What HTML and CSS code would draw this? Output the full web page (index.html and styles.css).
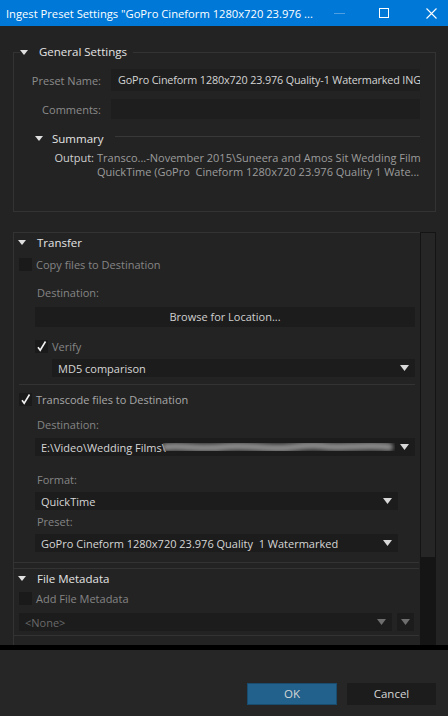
FILE: index.html
```html
<!DOCTYPE html>
<html>
<head>
<meta charset="utf-8">
<link rel="stylesheet" href="styles.css">
</head>
<body>
<div class="window">
  <div class="titlebar">
    <span class="title">Ingest Preset Settings "GoPro Cineform 1280x720 23.976 ...</span>
    <span class="tb-min"></span>
    <span class="tb-max"></span>
    <svg class="tb-close" width="11" height="11" viewBox="0 0 11 11"><path d="M0.5 0.5L10.5 10.5M10.5 0.5L0.5 10.5" stroke="#fff" stroke-width="1.1"/></svg>
  </div>

  <fieldset class="general">
    <legend class="legend"><svg class="tri" width="8" height="5" viewBox="0 0 8 5"><path d="M0 0H8L4 5Z" fill="#e0e0e0"/></svg><span class="head-text">General Settings</span></legend>
    <div class="frow first">
      <span class="flabel">Preset Name:</span>
      <div class="input tall">GoPro Cineform 1280x720 23.976 Quality-1 Watermarked ING</div>
    </div>
    <div class="frow">
      <span class="flabel">Comments:</span>
      <div class="input"></div>
    </div>
    <div class="summary">
      <svg class="tri" width="8" height="5" viewBox="0 0 8 5"><path d="M0 0H8L4 5Z" fill="#e0e0e0"/></svg>
      <span class="head-text">Summary</span>
      <span class="sumline"></span>
    </div>
    <div class="output">
      <span class="olabel">Output:</span>
      <div class="otext">
        <div>Transco...-November 2015\Suneera and Amos Sit Wedding Film</div>
        <div>QuickTime (GoPro&nbsp; Cineform 1280x720 23.976 Quality 1 Wate...</div>
      </div>
    </div>
  </fieldset>

  <div class="scrollarea">
    <div class="panel">
      <div class="section transfer">
        <div class="shead"><svg class="tri" width="8" height="5" viewBox="0 0 8 5"><path d="M0 0H8L4 5Z" fill="#e0e0e0"/></svg><span class="head-text">Transfer</span></div>
        <div class="crow r-copy"><span class="cbox"></span><span class="ctext dim">Copy files to Destination</span></div>
        <div class="lbl l-dest1">Destination:</div>
        <div class="button browse">Browse for Location...</div>
        <div class="crow r-verify"><span class="cbox"><svg width="13" height="13" viewBox="0 0 13 13"><path d="M3 7.2L5.2 10.2L10.5 1.5" fill="none" stroke="#f2f2f2" stroke-width="1.6"/></svg></span><span class="ctext dim">Verify</span></div>
        <div class="dd dd-md5"><span>MD5 comparison</span><svg class="arr" width="9" height="6" viewBox="0 0 9 6"><path d="M0 0H9L4.5 6Z" fill="#d8d8d8"/></svg></div>
        <div class="sep"></div>
        <div class="crow r-trans"><span class="cbox"><svg width="13" height="13" viewBox="0 0 13 13"><path d="M3 7.2L5.2 10.2L10.5 1.5" fill="none" stroke="#f2f2f2" stroke-width="1.6"/></svg></span><span class="ctext">Transcode files to Destination</span></div>
        <div class="lbl l-dest2">Destination:</div>
        <div class="dd dd-dest"><span>E:\Video\Wedding Films\</span><svg class="blur" width="232" height="18" viewBox="0 0 232 18"><defs><filter id="b" x="-10%" y="-80%" width="120%" height="260%"><feGaussianBlur stdDeviation="2"/></filter></defs><path d="M3 9 C20 7 40 12 60 9 C80 6 100 11 120 10 C135 9 145 6 160 8 C180 11 200 6 226 9" fill="none" stroke="#8a8a8a" stroke-width="8" stroke-linecap="round" filter="url(#b)"/></svg><svg class="arr" width="9" height="6" viewBox="0 0 9 6"><path d="M0 0H9L4.5 6Z" fill="#d8d8d8"/></svg></div>
        <div class="lbl l-format">Format:</div>
        <div class="dd dd-short dd-format"><span>QuickTime</span><svg class="arr" width="9" height="6" viewBox="0 0 9 6"><path d="M0 0H9L4.5 6Z" fill="#d8d8d8"/></svg></div>
        <div class="lbl l-preset">Preset:</div>
        <div class="dd dd-short dd-preset"><span>GoPro Cineform 1280x720 23.976 Quality&nbsp; 1 Watermarked</span><svg class="arr" width="9" height="6" viewBox="0 0 9 6"><path d="M0 0H9L4.5 6Z" fill="#d8d8d8"/></svg></div>
      </div>
      <div class="section meta">
        <div class="shead"><svg class="tri" width="8" height="5" viewBox="0 0 8 5"><path d="M0 0H8L4 5Z" fill="#e0e0e0"/></svg><span class="head-text">File Metadata</span></div>
        <div class="crow r-meta"><span class="cbox"></span><span class="ctext dim">Add File Metadata</span></div>
        <div class="nonerow">
          <div class="dd dd-none"><span>&lt;None&gt;</span><svg class="arr" width="9" height="6" viewBox="0 0 9 6"><path d="M0 0H9L4.5 6Z" fill="#6e6e6e"/></svg></div>
          <div class="dd-btn"><svg class="arr" width="9" height="6" viewBox="0 0 9 6"><path d="M0 0H9L4.5 6Z" fill="#6e6e6e"/></svg></div>
        </div>
        <div class="endline"></div>
      </div>
    </div>
    <div class="scrollbar">
      <div class="thumb"></div>
      <div class="track"></div>
    </div>
  </div>

  <div class="blackbar"></div>
  <div class="footer">
    <div class="fbtn ok">OK</div>
    <div class="fbtn cancel">Cancel</div>
  </div>
</div>
</body>
</html>
```

FILE: styles.css
```css
html, body {
  margin: 0;
  padding: 0;
  background: #232323;
}
body {
  width: 448px;
  height: 716px;
  overflow: hidden;
  font-family: "Open Sans", "Noto Sans", sans-serif;
  font-size: 11px;
  color: #cfcfcf;
}
.window {
  width: 448px;
  height: 716px;
  display: flex;
  flex-direction: column;
}
.titlebar {
  height: 26px;
  background: #0078d7;
  display: flex;
  align-items: center;
  flex-shrink: 0;
}
.title {
  color: #ffffff;
  font-size: 11.2px;
  margin-left: 6px;
  white-space: nowrap;
  width: 326px;
  overflow: hidden;
}
.tb-min {
  width: 11px;
  height: 1px;
  background: #4f9ee0;
  margin-left: 2px;
}
.tb-max {
  width: 8px;
  height: 8px;
  border: 1px solid #ffffff;
  margin-left: 34px;
}
.tb-close {
  margin-left: 37px;
}

/* General settings */
.general {
  margin: 18px 12px 0 13px;
  padding: 0 15px 0 0;
  border: 1px solid #333333;
  height: 166px;
  box-sizing: content-box;
  min-width: 0;
  flex-shrink: 0;
}
.legend {
  padding: 0 6px 0 0;
  margin-left: 6px;
  display: flex;
  align-items: center;
  height: 16px;
  line-height: 16px;
}
.tri {
  display: block;
  flex-shrink: 0;
}
.head-text {
  color: #e4e4e4;
  font-size: 11.5px;
  margin-left: 11px;
}
.frow {
  display: flex;
  align-items: center;
  margin-top: 8px;
}
.frow.first {
  margin-top: 9px;
}
.flabel {
  width: 87px;
  text-align: right;
  color: #8c8c8c;
  flex-shrink: 0;
}
.input {
  margin-left: 10px;
  flex: 1;
  height: 20px;
  line-height: 20px;
  background: #1e1e1e;
  color: #d4d4d4;
  padding-left: 7px;
  white-space: nowrap;
  overflow: hidden;
}
.input.tall {
  height: 22px;
  line-height: 22px;
  font-size: 10.8px;
  letter-spacing: -0.15px;
}
.summary {
  display: flex;
  align-items: center;
  margin-top: 12px;
  margin-left: 21px;
  height: 14px;
}
.summary .head-text {
  margin-left: 9px;
}
.sumline {
  flex: 1;
  height: 1px;
  background: #383838;
  margin-left: 11px;
  margin-top: -3px;
}
.output {
  display: flex;
  margin-top: 6px;
  line-height: 14px;
}
.olabel {
  width: 80px;
  text-align: right;
  color: #d0d0d0;
  flex-shrink: 0;
}
.otext {
  margin-left: 3px;
  color: #9c9c9c;
  white-space: nowrap;
}

/* Lower scrollable area */
.scrollarea {
  margin: 20px 12px 0 13px;
  height: 413px;
  display: flex;
  flex-shrink: 0;
}
.panel {
  flex: 1;
  border-left: 1px solid #333333;
  border-top: 1px solid #333333;
  overflow: hidden;
  display: flex;
  flex-direction: column;
}
.section {
  margin-right: 1px;
}
.transfer {
  border-bottom: 1px solid #333333;
  padding-bottom: 10px;
}
.meta {
  border-top: 1px solid #333333;
  margin-top: 5px;
}
.shead {
  height: 19px;
  display: flex;
  align-items: center;
  padding-left: 4px;
}
.shead .head-text {
  margin-left: 11px;
}
.crow {
  height: 15px;
  display: flex;
  align-items: center;
  padding-left: 5px;
}
.cbox {
  width: 13px;
  height: 13px;
  background: #1a1a1a;
  flex-shrink: 0;
  display: block;
}
.cbox svg {
  display: block;
}
.ctext {
  margin-left: 4px;
  color: #a8a8a8;
}
.ctext.dim {
  color: #858585;
}
.lbl {
  height: 14px;
  line-height: 14px;
  padding-left: 23px;
  color: #858585;
}
.r-copy { margin-top: 5px; }
.l-dest1 { margin-top: 14px; }
.button {
  background: #1c1c1c;
  color: #d0d0d0;
  text-align: center;
}
.browse {
  margin: 7px 0 0 21px;
  width: 380px;
  height: 20px;
  line-height: 20px;
}
.r-verify {
  margin-top: 12px;
  padding-left: 21px;
}
.dd {
  background: #1c1c1c;
  height: 18px;
  display: flex;
  align-items: center;
  color: #d6d6d6;
  padding-left: 6px;
  box-sizing: border-box;
  white-space: nowrap;
}
.dd span {
  flex: 1;
}
.dd .arr {
  display: block;
  margin-right: 6px;
  flex-shrink: 0;
}
.dd-md5 {
  margin: 5px 0 0 38px;
  width: 363px;
}
.sep {
  margin: 7px 0 0 5px;
  width: 396px;
  height: 1px;
  background: #333333;
}
.r-trans { margin-top: 7px; }
.l-dest2 { margin-top: 11px; }
.dd-dest {
  margin: 6px 0 0 21px;
  width: 380px;
}
.dd-dest span {
  flex: none;
}
.dd-dest .blur {
  display: block;
  margin-left: -3px;
  flex: none;
}
.dd-dest .arr {
  margin-left: auto;
}
.l-format { margin-top: 17px; }
.dd-short {
  margin: 5px 0 0 21px;
  width: 363px;
}
.l-preset { margin-top: 5px; }
.r-meta { margin-top: 3px; }
.nonerow {
  display: flex;
  margin: 7px 0 0 5px;
  gap: 5px;
}
.dd-none {
  width: 373px;
  color: #6a6a6a;
}
.dd-btn {
  width: 17px;
  height: 18px;
  background: #1c1c1c;
  display: flex;
  align-items: center;
  justify-content: center;
}
.dd-btn .arr {
  display: block;
}
.endline {
  margin-top: 4px;
  height: 1px;
  background: #333333;
}
.scrollbar {
  width: 16px;
  display: flex;
  flex-direction: column;
  flex-shrink: 0;
}
.thumb {
  height: 325px;
  background: #262626;
  border: 1px solid #141414;
  border-bottom: none;
  box-sizing: border-box;
}
.track {
  flex: 1;
  background: #151515;
}
.blackbar {
  height: 5px;
  background: #000000;
  flex-shrink: 0;
}
.footer {
  flex: 1;
  background: #262626;
  display: flex;
  justify-content: flex-end;
  align-items: flex-start;
  padding: 33px 12px 0 0;
  gap: 10px;
}
.fbtn {
  width: 90px;
  height: 22px;
  line-height: 22px;
  text-align: center;
  font-size: 11.5px;
  color: #d6d6d6;
  box-sizing: border-box;
}
.ok {
  background: #22618c;
  border: 1px solid #1a4c6e;
  line-height: 20px;
}
.cancel {
  width: 89px;
  background: #1c1c1c;
}
```
